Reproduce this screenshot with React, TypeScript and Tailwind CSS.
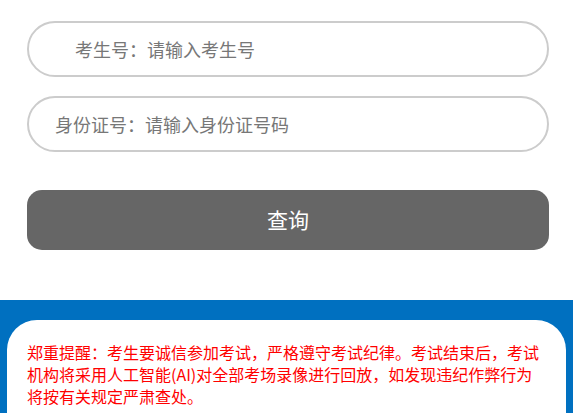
export default function App() {
  const font = {
    fontFamily: '"Microsoft YaHei", "Noto Sans CJK SC", "Noto Sans", sans-serif',
  };

  return (
    <div className="min-h-[413px] bg-white flex flex-col" style={font}>
      <div className="pl-[27px] pr-[24px] pt-[21px] pb-[50px]">
        <div className="flex flex-col gap-[19px]">
          <input
            type="text"
            placeholder="考生号：请输入考生号"
            className="h-[56px] w-full rounded-full border-2 border-[#cccccc] bg-white pl-[46px] text-[18px] text-[#555] outline-none placeholder:text-[#777777]"
          />
          <input
            type="text"
            placeholder="身份证号：请输入身份证号码"
            className="h-[56px] w-full rounded-full border-2 border-[#cccccc] bg-white pl-[26px] text-[18px] text-[#555] outline-none placeholder:text-[#777777]"
          />
        </div>
        <button
          type="button"
          className="mt-[38px] h-[60px] w-full rounded-[15px] bg-[#666666] text-[21px] text-white"
        >
          查询
        </button>
      </div>

      <div className="flex-1 bg-[#0070c0] px-[7px] pt-[20px]">
        <div className="h-full rounded-t-[30px] bg-white pl-[20px] pr-[20px] pt-[21px] pb-[10px]">
          <p className="text-[16px] leading-[22px] text-[#ff0000]">
            郑重提醒：考生要诚信参加考试，严格遵守考试纪律。考试结束后，考试机构将采用人工智能(AI)对全部考场录像进行回放，如发现违纪作弊行为将按有关规定严肃查处。
          </p>
        </div>
      </div>
    </div>
  );
}
